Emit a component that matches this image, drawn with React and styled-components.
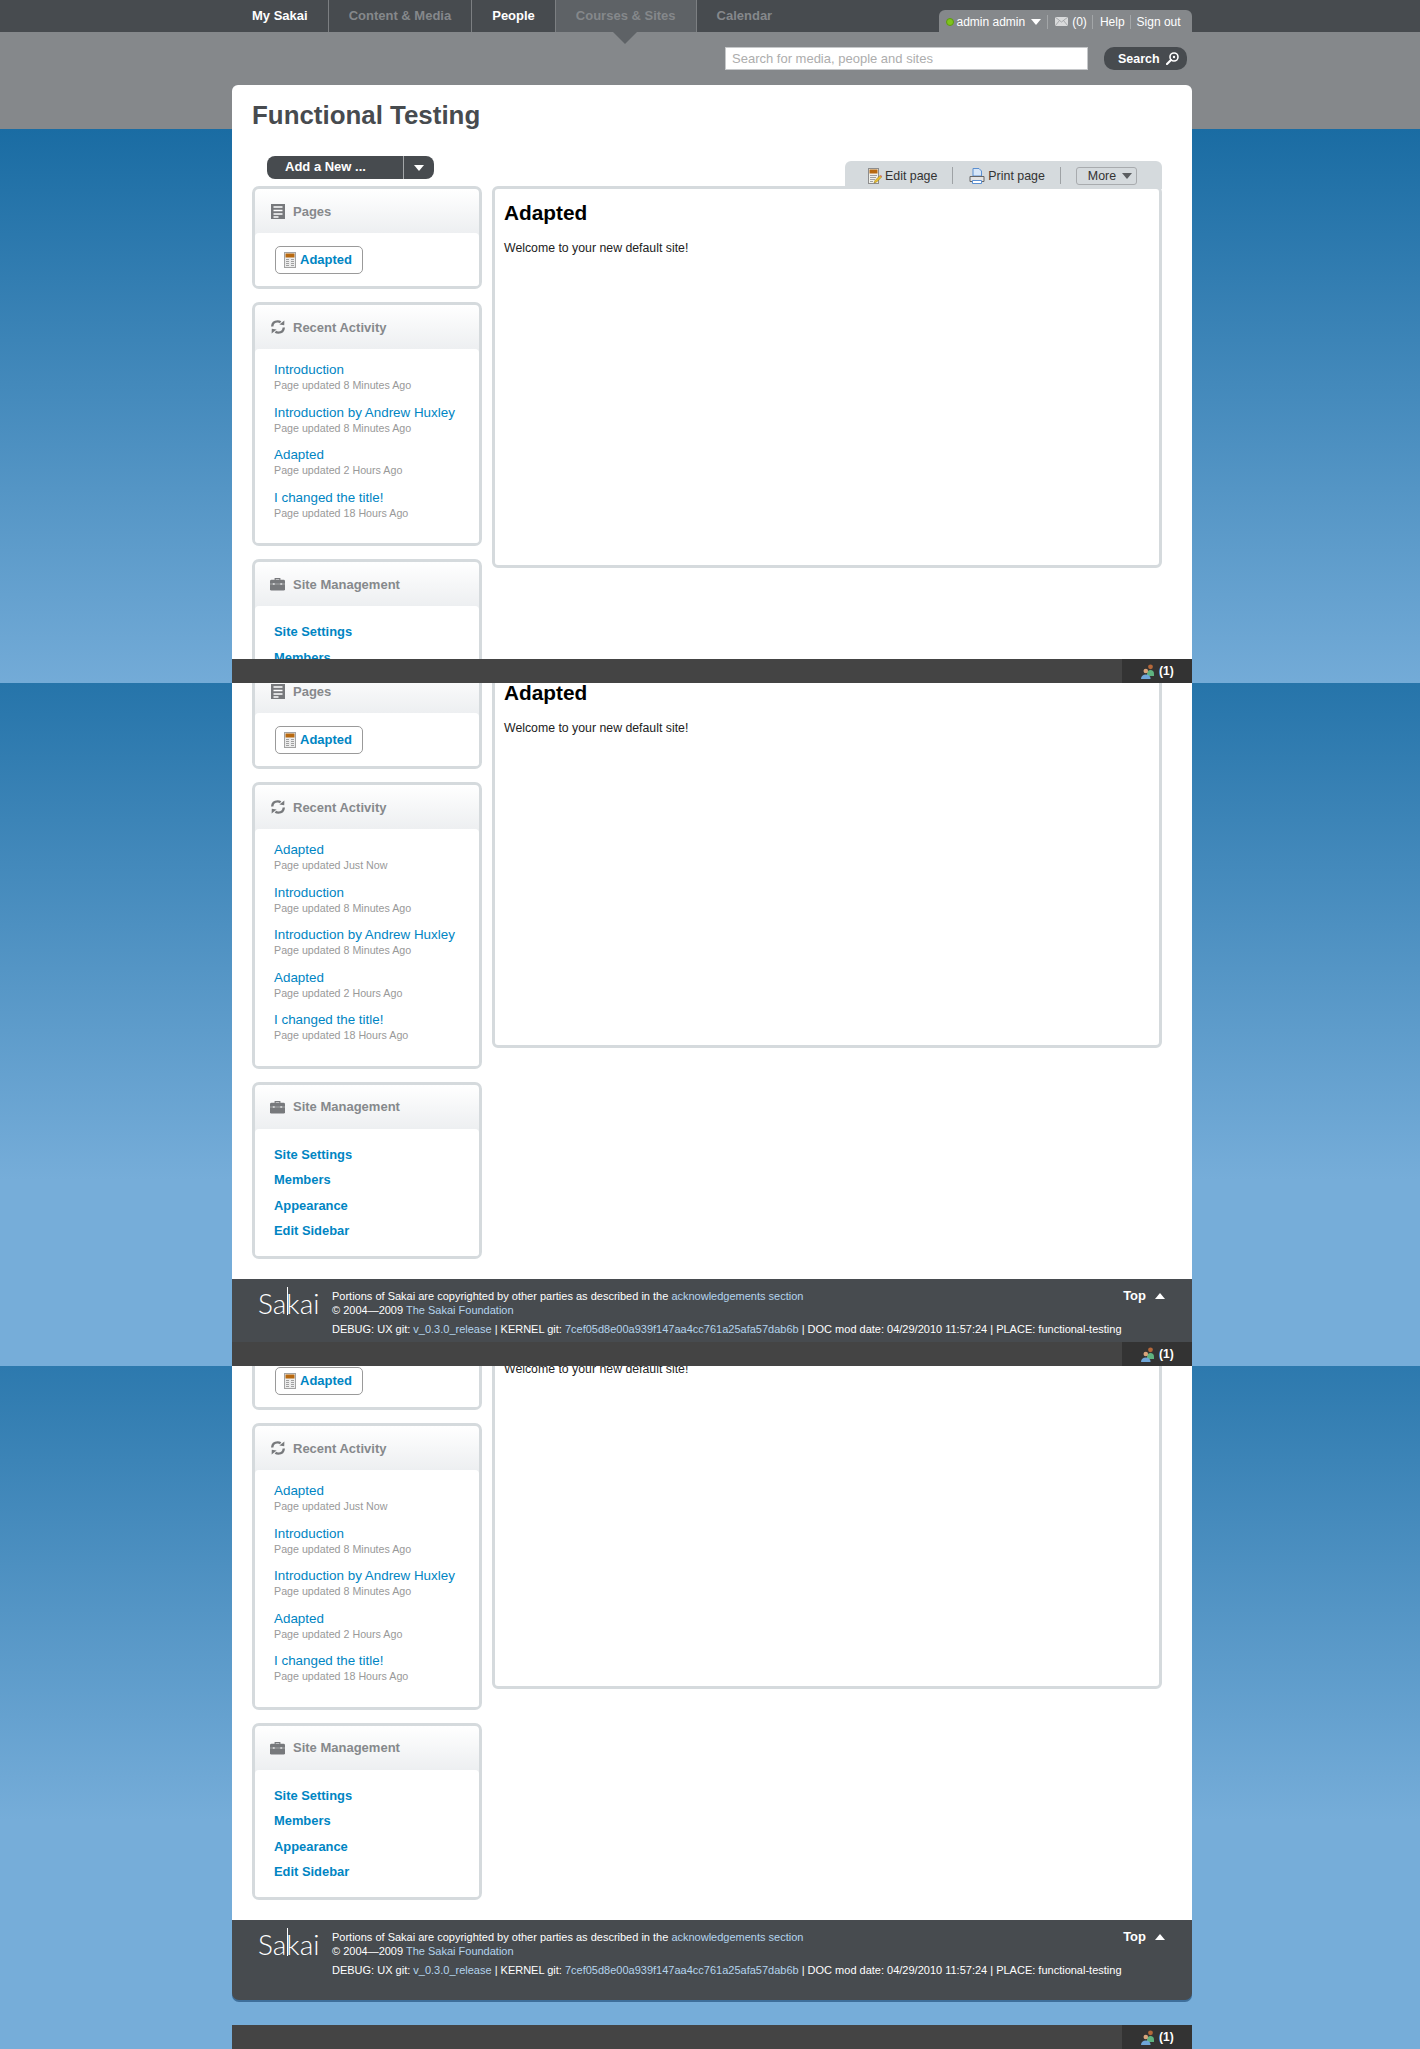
import React from 'react';
import styled, { createGlobalStyle } from 'styled-components';

const GlobalStyle = createGlobalStyle`
  html, body {
    margin: 0;
    padding: 0;
    background: #fff;
    font-family: "Liberation Sans", Arial, sans-serif;
  }
  a {
    text-decoration: none;
    color: inherit;
  }
`;

const Screen = styled.div`
  position: relative;
  height: 683px;
  overflow: hidden;
`;

const Page = styled.div`
  margin-top: ${(p) => -p.$scroll}px;
  min-height: 960px;
  background: linear-gradient(#85888b 129px, #1a6ca3 129px, #76add9 700px);
`;

const Nav = styled.div`
  display: flex;
  height: 32px;
  padding: 0 228px 0 232px;
  background: #474b4f;
`;

const NavItem = styled.div`
  position: relative;
  display: flex;
  align-items: center;
  height: 32px;
  padding: 0 20px 2px;
  box-sizing: border-box;
  border-right: ${(p) => (p.$last ? 'none' : '1px solid #7c7f82')};
  font-size: 13px;
  font-weight: bold;
  color: ${(p) => (p.$on ? '#fff' : '#85888b')};
  background: ${(p) => (p.$current ? '#5e6266' : 'none')};
  ${(p) =>
    p.$current &&
    `&:after {
      content: '';
      position: absolute;
      left: 57px;
      top: 32px;
      border-style: solid;
      border-width: 12px 12px 0;
      border-color: #5e6266 transparent transparent;
    }`}
`;

const UserMenu = styled.div`
  display: flex;
  align-items: center;
  align-self: flex-end;
  height: 22px;
  width: 253px;
  margin-left: auto;
  padding: 1px 0 0 7px;
  box-sizing: border-box;
  background: #85888b;
  border-radius: 6px 6px 0 0;
  font-size: 12px;
  color: #fff;
`;

const OnlineDot = styled.span`
  width: 6px;
  height: 6px;
  margin-right: 2.5px;
  border-radius: 50%;
  background: #7fc31c;
  border: 0.5px solid #5c9a10;
`;

const DownArrow = styled.span`
  display: inline-block;
  margin-left: ${(p) => p.$left || 6}px;
  border-style: solid;
  border-width: 6px 5.5px 0;
  border-color: ${(p) => p.$color || '#fff'} transparent transparent;
`;

const MenuSep = styled.span`
  width: 1px;
  height: 14px;
  margin: 0 ${(p) => p.$right || 7}px 0 ${(p) => p.$left || 5}px;
  background: #a3a6a8;
`;

const SearchRow = styled.div`
  display: flex;
  justify-content: flex-end;
  gap: 16px;
  height: 53px;
  padding: 15px 233px 0 0;
  box-sizing: border-box;
`;

const SearchInput = styled.div`
  width: 363px;
  height: 23px;
  padding-left: 6px;
  box-sizing: border-box;
  background: #fff;
  border: 1px solid #c6c8ca;
  font-size: 13px;
  line-height: 21px;
  color: #adadad;
`;

const SearchButton = styled.div`
  display: flex;
  align-items: center;
  width: 83px;
  height: 23px;
  padding-left: 14px;
  box-sizing: border-box;
  border-radius: 10px;
  background: #474b4f;
  font-size: 12.5px;
  font-weight: bold;
  color: #fff;
  svg {
    margin-left: 6px;
  }
`;

const Panel = styled.div`
  width: 960px;
  margin-left: 232px;
  background: #fff;
  border-radius: 6px 6px 0 0;
  box-sizing: border-box;
  padding: 0 30px 20px 20px;
`;

const Title = styled.h1`
  margin: 0;
  padding-top: 15px;
  font-size: 25.9px;
  line-height: 30px;
  font-weight: bold;
  color: #474b4f;
`;

const ToolRow = styled.div`
  display: flex;
  justify-content: space-between;
  align-items: flex-end;
  height: 56px;
`;

const AddButton = styled.div`
  display: flex;
  width: 167px;
  height: 23px;
  margin: 0 0 7px 15px;
  border-radius: 8px;
  background: #474b4f;
  color: #fff;
  font-size: 13px;
  font-weight: bold;
`;

const AddLabel = styled.div`
  width: 137px;
  padding-left: 18px;
  box-sizing: border-box;
  line-height: 21px;
  border-right: 1px solid #a3a6a8;
`;

const AddCaret = styled.div`
  flex: 1;
  display: flex;
  align-items: center;
  justify-content: center;
  span {
    margin-left: 0;
  }
`;

const PageTab = styled.div`
  position: relative;
  display: flex;
  align-items: center;
  width: 317px;
  height: 28px;
  margin-bottom: -3px;
  padding: 1px 0 0 23px;
  box-sizing: border-box;
  background: #d5dadd;
  border-radius: 6px 6px 0 0;
  font-size: 12.4px;
  color: #333;
  svg {
    margin-right: 3px;
  }
`;

const TabSep = styled.span`
  width: 1px;
  height: 17px;
  margin: 0 ${(p) => p.$right}px 0 15px;
  background: #9ea2a5;
`;

const MoreButton = styled.span`
  display: flex;
  align-items: center;
  width: 61px;
  height: 18px;
  padding-left: 11px;
  box-sizing: border-box;
  border: 1px solid #a8abae;
  border-radius: 3px;
`;

const Columns = styled.div`
  display: flex;
  gap: 10px;
  align-items: flex-start;
`;

const Sidebar = styled.div`
  width: 230px;
  display: flex;
  flex-direction: column;
  gap: 13px;
`;

const Box = styled.div`
  border: 3px solid #d5dadd;
  border-radius: 7px;
  background: linear-gradient(#fff, #edeff1 44px);
`;

const BoxHead = styled.div`
  display: flex;
  align-items: center;
  height: 44px;
  padding-left: 15px;
  font-size: 13px;
  font-weight: bold;
  color: #86898c;
  box-sizing: border-box;
`;

const HeadIcon = styled.span`
  display: flex;
  justify-content: center;
  width: 15px;
  margin-right: 8px;
`;

const BoxBody = styled.div`
  padding: ${(p) => p.$pad || '13px 19px 12px'};
  background: #fff;
  border-radius: 4px 4px 3px 3px;
`;

const PageChip = styled.a`
  display: flex;
  align-items: center;
  width: 88px;
  height: 28px;
  margin-left: 1px;
  padding: 0 0 1px 8px;
  box-sizing: border-box;
  border: 1px solid #9a9a9a;
  border-radius: 5px;
  font-size: 13px;
  font-weight: bold;
  color: #0085c3;
  svg {
    margin-right: 4px;
  }
`;

const RecentItem = styled.div`
  margin-bottom: 12.5px;
`;

const RecentLink = styled.a`
  display: block;
  font-size: 13.4px;
  line-height: 16px;
  white-space: nowrap;
  color: #0085c3;
`;

const RecentMeta = styled.div`
  font-size: 10.7px;
  line-height: 14px;
  color: #999;
`;

const RecentEnd = styled.div`
  height: 11px;
`;

const ManageLink = styled.a`
  display: block;
  font-size: 12.9px;
  line-height: 25.6px;
  font-weight: bold;
  color: #0085c3;
`;

const MainBox = styled.div`
  width: 670px;
  height: 382px;
  box-sizing: border-box;
  padding: 11px 9px;
  border: 3px solid #d5dadd;
  border-radius: 6px;
`;

const MainTitle = styled.h2`
  margin: 0;
  font-size: 20.8px;
  line-height: 26px;
  font-weight: bold;
  color: #000;
`;

const MainText = styled.p`
  margin: 14px 0 0;
  font-size: 12.3px;
  line-height: 16px;
  color: #222;
`;

const Footer = styled.div`
  display: flex;
  width: 960px;
  height: 80px;
  margin-left: 232px;
  padding: 10px 27px 0 26px;
  box-sizing: border-box;
  background: #474b4f;
  border-radius: 0 0 7px 7px;
  box-shadow: 0 2px 0 #3e6f9b;
  color: #fff;
  font-size: 11px;
  line-height: 14px;
  white-space: nowrap;
`;

const Logo = styled.div`
  width: 74px;
  margin-top: -2px;
  font-family: Lato, "Open Sans", sans-serif;
  font-weight: 300;
  font-size: 28px;
  line-height: 32px;
  color: #fff;
`;

const LogoK = styled.span`
  position: relative;
  &:before {
    content: '';
    position: absolute;
    left: 1px;
    top: 1px;
    width: 1px;
    height: 28px;
    background: #fff;
  }
`;

const FooterText = styled.div`
  flex: 1;
`;

const DebugLine = styled.div`
  margin-top: 5px;
`;

const FooterLink = styled.a`
  color: #b4d4ee;
`;

const TopLink = styled.div`
  display: flex;
  align-items: center;
  align-self: flex-start;
  height: 14px;
  font-size: 13px;
  font-weight: bold;
`;

const UpArrow = styled.span`
  margin-left: 9px;
  border-style: solid;
  border-width: 0 5px 6px;
  border-color: transparent transparent #fff;
`;

const ChatBar = styled.div`
  position: absolute;
  left: 232px;
  bottom: 0;
  display: flex;
  justify-content: flex-end;
  width: 960px;
  height: 24px;
  background: #444;
`;

const ChatCount = styled.div`
  display: flex;
  align-items: center;
  width: 70px;
  padding-left: 19px;
  box-sizing: border-box;
  background: #333;
  color: #fff;
  font-size: 12px;
  font-weight: bold;
  svg {
    margin-right: 4px;
  }
`;

const PagesIcon = () => (
  <svg width="14" height="15" viewBox="0 0 14 15">
    <rect width="14" height="15" fill="#77797c" />
    <path d="M2.5 3h9M2.5 6.5h9M2.5 10h9M2.5 13h5" stroke="#fff" strokeWidth="1.3" />
  </svg>
);

const RecentIcon = () => (
  <svg width="14" height="14" viewBox="0 0 14 14" fill="none">
    <path d="M1.2 6.5C1.4 3.4 3.6 1.4 6.6 1.4c1.2 0 2.2.3 3 .9" stroke="#77797c" strokeWidth="2.4" />
    <path d="M13.4.4l-.2 4.8-4.8-.6z" fill="#77797c" />
    <path d="M12.8 7.5c-.2 3.1-2.4 5.1-5.4 5.1-1.2 0-2.2-.3-3-.9" stroke="#77797c" strokeWidth="2.4" />
    <path d="M.6 13.6l.2-4.8 4.8.6z" fill="#77797c" />
  </svg>
);

const CaseIcon = () => (
  <svg width="16" height="14" viewBox="0 0 16 14">
    <path d="M5.5 3V1.3h5V3" fill="none" stroke="#77797c" strokeWidth="1.2" />
    <rect y="2.5" width="16" height="11.5" rx="1.5" fill="#77797c" />
    <path d="M0 7h16" stroke="#a5a7a9" strokeWidth="1" />
    <rect x="3" y="6" width="2" height="2" fill="#d0d1d2" />
    <rect x="11" y="6" width="2" height="2" fill="#d0d1d2" />
  </svg>
);

const DocIcon = () => (
  <svg width="12" height="16" viewBox="0 0 12 16">
    <rect x="0.5" y="0.5" width="11" height="15" fill="#ececec" stroke="#a3a3a3" />
    <rect x="1.5" y="1.5" width="9" height="4" fill="#b8690f" />
    <path d="M2 7.5h3M7 7.5h3M2 9.5h3M7 9.5h3M2 11.5h3M7 11.5h3M2 13.5h3M7 13.5h3" stroke="#a0a0a0" />
  </svg>
);

const EditIcon = () => (
  <svg width="14" height="16" viewBox="0 0 14 16">
    <rect x="0.5" y="0.5" width="10" height="15" fill="#f0f0ea" stroke="#8d8d8d" />
    <rect x="1.5" y="1.5" width="8" height="4" fill="#b8690f" />
    <path d="M2 7.5h7M2 9.5h6M2 11.5h5M2 13.5h3" stroke="#a0a0a0" />
    <path d="M6 15l1-2.5 5-5 1.6 1.6-5 5z" fill="#eac02f" stroke="#8a6d10" strokeWidth="0.5" />
    <path d="M12 7.5l1.6 1.6 .4-.9-1-1z" fill="#d9534f" />
  </svg>
);

const PrintIcon = () => (
  <svg width="16" height="16" viewBox="0 0 16 16">
    <path d="M4 .5h6l2.5 2.5v5H4z" fill="#d7e6f7" stroke="#5b8fd0" />
    <path d="M1 8.5h14v5H1z" fill="#e3e3e3" stroke="#666" />
    <path d="M3.5 12.5h9v3h-9z" fill="#fff" stroke="#5b8fd0" />
  </svg>
);

const MailIcon = () => (
  <svg width="13" height="9" viewBox="0 0 13 9" style={{ marginRight: 4 }}>
    <rect width="13" height="9" fill="#d9dadb" />
    <path d="M0 0l6.5 5L13 0M0 9l4.5-5.5M13 9L8.5 3.5" fill="none" stroke="#9b9d9f" strokeWidth="0.8" />
  </svg>
);

const SearchIcon = () => (
  <svg width="13" height="13" viewBox="0 0 13 13" fill="none">
    <circle cx="8" cy="5" r="4" stroke="#fff" strokeWidth="1.6" />
    <circle cx="8" cy="5" r="1.2" fill="#fff" />
    <path d="M5 8l-4 4" stroke="#fff" strokeWidth="2.2" strokeLinecap="round" />
  </svg>
);

const PeopleIcon = () => (
  <svg width="14" height="15" viewBox="0 0 14 15">
    <circle cx="9.5" cy="2.8" r="2.4" fill="#b5683a" />
    <path d="M6 10c0-3 1.5-4 3.5-4s3.5 1 3.5 4v2H6z" fill="#5fb27f" />
    <circle cx="4.8" cy="7" r="2.3" fill="#d9a57c" />
    <path d="M0 15c0-3 2-4.5 4.8-4.5S9.6 12 9.6 15z" fill="#6ea6d8" />
  </svg>
);

const firstRecent = [
  ['Introduction', 'Page updated 8 Minutes Ago'],
  ['Introduction by Andrew Huxley', 'Page updated 8 Minutes Ago'],
  ['Adapted', 'Page updated 2 Hours Ago'],
  ['I changed the title!', 'Page updated 18 Hours Ago'],
];

const laterRecent = [['Adapted', 'Page updated Just Now'], ...firstRecent];

const navItems = ['My Sakai', 'Content & Media', 'People', 'Courses & Sites', 'Calendar'];

const manageLinks = ['Site Settings', 'Members', 'Appearance', 'Edit Sidebar'];

const Header = () => (
  <>
    <Nav>
      {navItems.map((name, i) => (
        <NavItem key={name} $on={i === 0 || i === 2} $current={i === 3} $last={i === 4}>
          {name}
        </NavItem>
      ))}
      <UserMenu>
        <OnlineDot />
        admin admin
        <DownArrow />
        <MenuSep $left={6} />
        <MailIcon />
        (0)
        <MenuSep />
        Help
        <MenuSep $right={6} />
        Sign out
      </UserMenu>
    </Nav>
    <SearchRow>
      <SearchInput>Search for media, people and sites</SearchInput>
      <SearchButton>
        Search
        <SearchIcon />
      </SearchButton>
    </SearchRow>
  </>
);

const Site = ({ scroll, recent }) => (
  <Screen>
    <Page $scroll={scroll}>
      <Header />
      <Panel>
        <Title>Functional Testing</Title>
        <ToolRow>
          <AddButton>
            <AddLabel>Add a New ...</AddLabel>
            <AddCaret>
              <DownArrow />
            </AddCaret>
          </AddButton>
          <PageTab>
            <EditIcon />
            Edit page
            <TabSep $right={16} />
            <PrintIcon />
            Print page
            <TabSep $right={15} />
            <MoreButton>
              More
              <DownArrow $color="#5b5e61" />
            </MoreButton>
          </PageTab>
        </ToolRow>
        <Columns>
          <Sidebar>
            <Box>
              <BoxHead>
                <HeadIcon>
                  <PagesIcon />
                </HeadIcon>
                Pages
              </BoxHead>
              <BoxBody>
                <PageChip>
                  <DocIcon />
                  Adapted
                </PageChip>
              </BoxBody>
            </Box>
            <Box>
              <BoxHead>
                <HeadIcon>
                  <RecentIcon />
                </HeadIcon>
                Recent Activity
              </BoxHead>
              <BoxBody $pad="13px 19px 0">
                {recent.map(([title, meta], i) => (
                  <RecentItem key={i}>
                    <RecentLink>{title}</RecentLink>
                    <RecentMeta>{meta}</RecentMeta>
                  </RecentItem>
                ))}
                <RecentEnd />
              </BoxBody>
            </Box>
            <Box>
              <BoxHead>
                <HeadIcon>
                  <CaseIcon />
                </HeadIcon>
                Site Management
              </BoxHead>
              <BoxBody>
                {manageLinks.map((name) => (
                  <ManageLink key={name}>{name}</ManageLink>
                ))}
              </BoxBody>
            </Box>
          </Sidebar>
          <MainBox>
            <MainTitle>Adapted</MainTitle>
            <MainText>Welcome to your new default site!</MainText>
          </MainBox>
        </Columns>
      </Panel>
      <Footer>
        <Logo>
          Sa
          <LogoK>k</LogoK>
          ai
        </Logo>
        <FooterText>
          <div>
            Portions of Sakai are copyrighted by other parties as described in the{' '}
            <FooterLink>acknowledgements section</FooterLink>
          </div>
          <div>
            © 2004—2009 <FooterLink>The Sakai Foundation</FooterLink>
          </div>
          <DebugLine>
            DEBUG: UX git: <FooterLink>v_0.3.0_release</FooterLink> | KERNEL git:{' '}
            <FooterLink>7cef05d8e00a939f147aa4cc761a25afa57dab6b</FooterLink> | DOC mod date:
            04/29/2010 11:57:24 | PLACE: functional-testing
          </DebugLine>
        </FooterText>
        <TopLink>
          Top
          <UpArrow />
        </TopLink>
      </Footer>
    </Page>
    <ChatBar>
      <ChatCount>
        <PeopleIcon />
        (1)
      </ChatCount>
    </ChatBar>
  </Screen>
);

export default function App() {
  return (
    <>
      <GlobalStyle />
      <Site scroll={0} recent={firstRecent} />
      <Site scroll={203} recent={laterRecent} />
      <Site scroll={245} recent={laterRecent} />
    </>
  );
}
